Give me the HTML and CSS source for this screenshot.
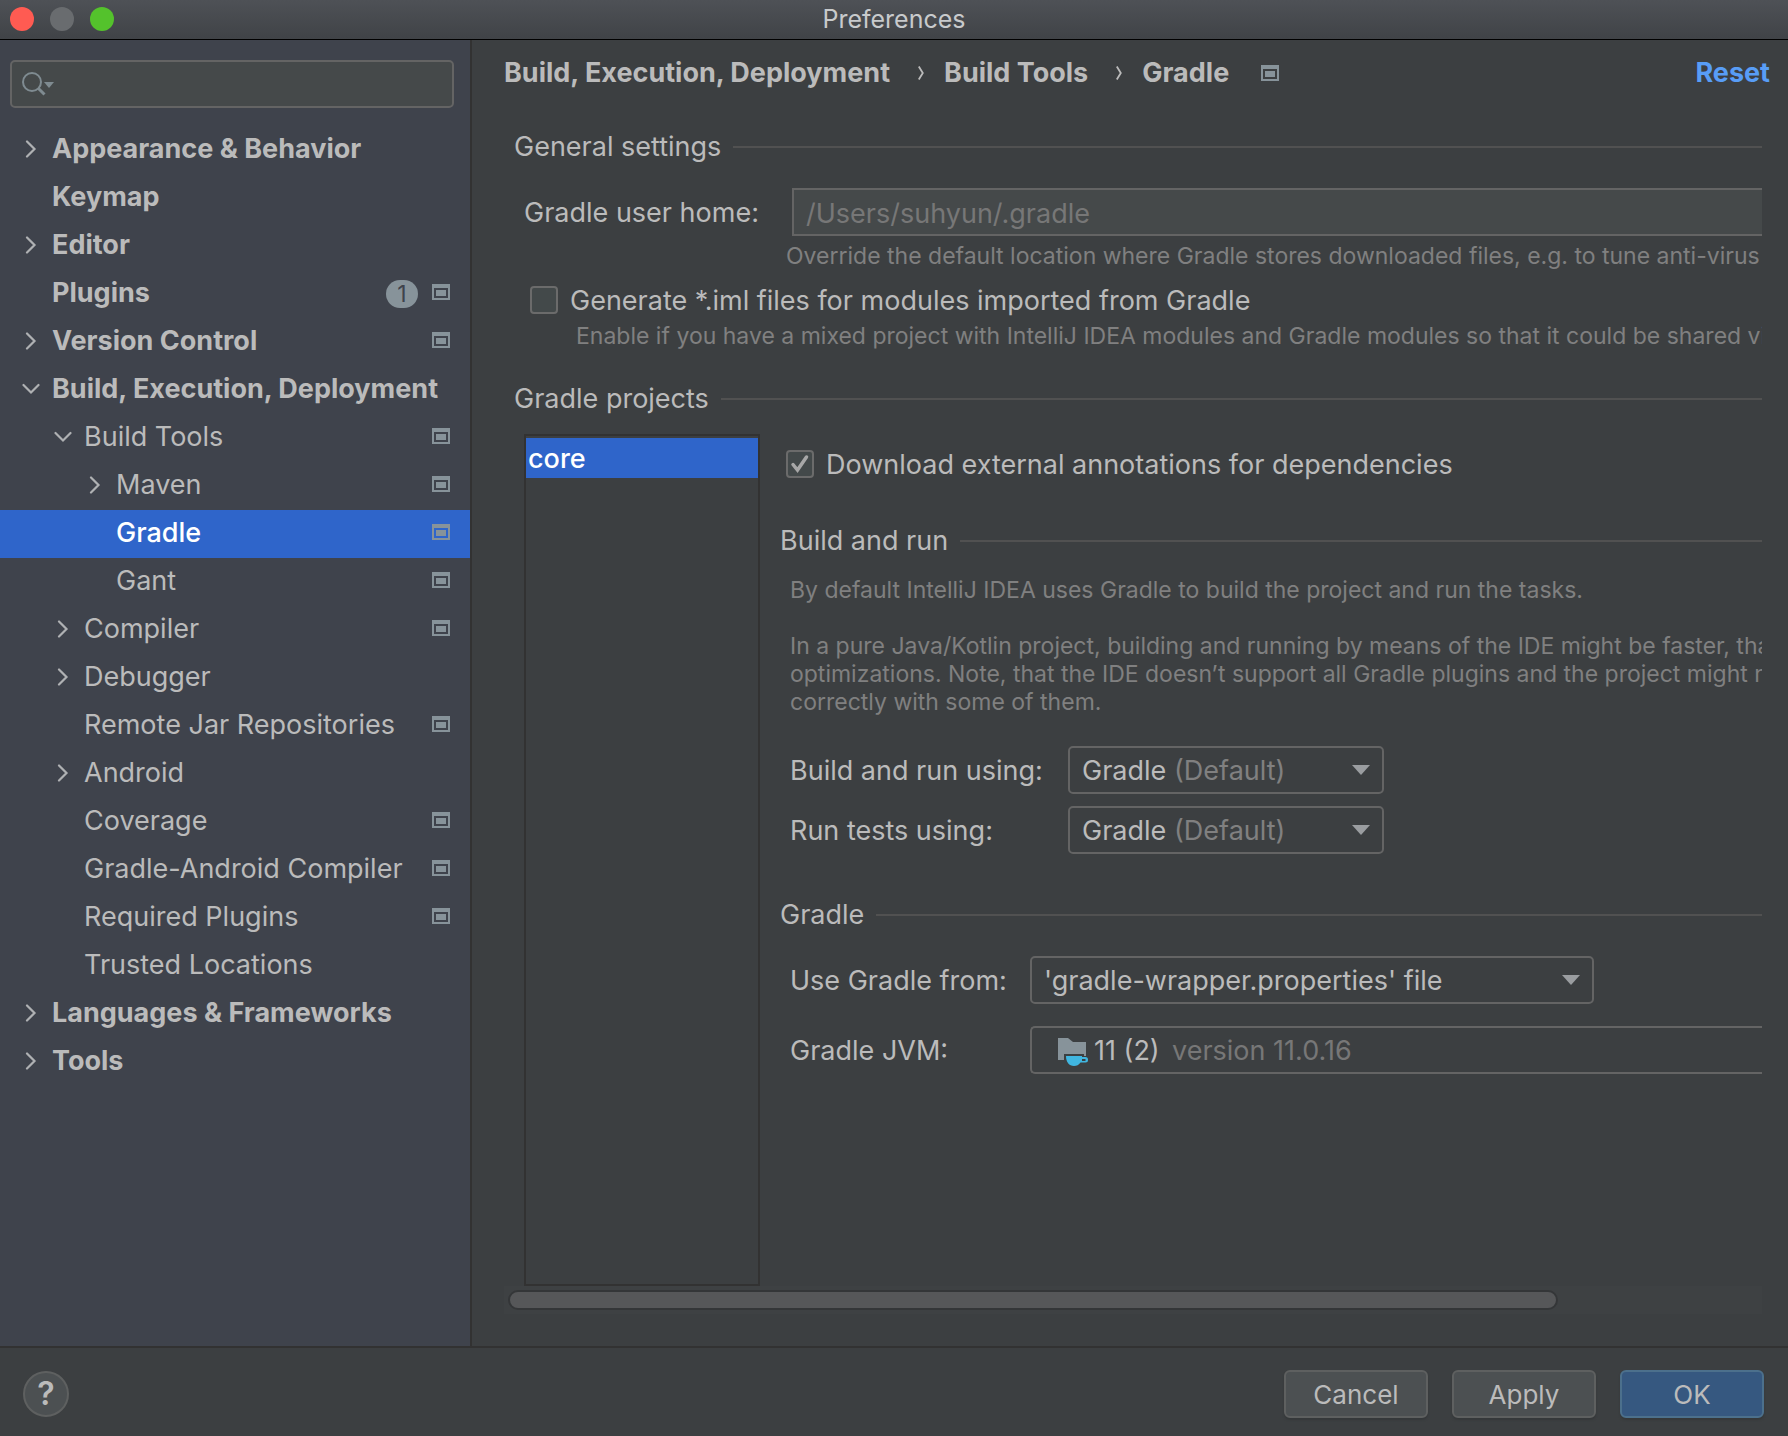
FILE: index.html
```html
<!DOCTYPE html>
<html lang="en">
<head>
<meta charset="utf-8">
<title>Preferences</title>
<link rel="stylesheet" href="styles.css">
</head>
<body>
<svg class="sprite" aria-hidden="true">
  <symbol id="right" viewBox="0 0 18 18"><path d="M5 1.500 12.500 9 5 16.500" fill="none" stroke="currentColor" stroke-width="2.200" stroke-linecap="round"/></symbol>
  <symbol id="down" viewBox="0 0 18 18"><path d="M1.500 5 9 12.500 16.500 5" fill="none" stroke="currentColor" stroke-width="2.200" stroke-linecap="round"/></symbol>
  <symbol id="project" viewBox="0 0 18 16"><path d="M0 0h18v16H0zM2 4v10h14V4z" fill="currentColor" fill-rule="evenodd"/><path d="M4 6h10v6H4z" fill="currentColor"/></symbol>
  <symbol id="crumb" viewBox="0 0 6 14"><path d="M.8.5 4.800 7 .8 13.500" fill="none" stroke="currentColor" stroke-width="1.800"/></symbol>
</svg>

<header class="titlebar">
  <div class="lights">
    <button class="light light-close" aria-label="Close"></button>
    <button class="light light-minimize" aria-label="Minimize"></button>
    <button class="light light-zoom" aria-label="Zoom"></button>
  </div>
  <h1 class="title">Preferences</h1>
</header>

<div class="window">
  <aside class="sidebar">
    <div class="search">
      <svg class="search-icon" viewBox="0 0 32 24" aria-hidden="true"><circle cx="10" cy="10" r="9" fill="none" stroke="currentColor" stroke-width="2"/><path d="M16.500 16.500 22.500 22.500" stroke="currentColor" stroke-width="3"/><path d="M22 10h10l-5 6z" fill="currentColor"/></svg>
      <input class="search-input" type="search" aria-label="Search settings">
    </div>
    <ul class="tree">
      <li><a class="row top" href="#"><svg class="arrow"><use href="#right"/></svg><span class="name">Appearance &amp; Behavior</span></a></li>
      <li><a class="row top" href="#"><span class="arrow"></span><span class="name">Keymap</span></a></li>
      <li><a class="row top" href="#"><svg class="arrow"><use href="#right"/></svg><span class="name">Editor</span></a></li>
      <li><a class="row top" href="#"><span class="arrow"></span><span class="name">Plugins</span><span class="badge">1</span><svg class="project"><use href="#project"/></svg></a></li>
      <li><a class="row top" href="#"><svg class="arrow"><use href="#right"/></svg><span class="name">Version Control</span><svg class="project"><use href="#project"/></svg></a></li>
      <li><a class="row top" href="#"><svg class="arrow"><use href="#down"/></svg><span class="name">Build, Execution, Deployment</span></a>
        <ul class="branch">
          <li><a class="row child" href="#"><svg class="arrow"><use href="#down"/></svg><span class="name">Build Tools</span><svg class="project"><use href="#project"/></svg></a>
            <ul class="branch">
              <li><a class="row grandchild" href="#"><svg class="arrow"><use href="#right"/></svg><span class="name">Maven</span><svg class="project"><use href="#project"/></svg></a></li>
              <li><a class="row grandchild selected" href="#" aria-current="page"><span class="arrow"></span><span class="name">Gradle</span><svg class="project"><use href="#project"/></svg></a></li>
              <li><a class="row grandchild" href="#"><span class="arrow"></span><span class="name">Gant</span><svg class="project"><use href="#project"/></svg></a></li>
            </ul>
          </li>
          <li><a class="row child" href="#"><svg class="arrow"><use href="#right"/></svg><span class="name">Compiler</span><svg class="project"><use href="#project"/></svg></a></li>
          <li><a class="row child" href="#"><svg class="arrow"><use href="#right"/></svg><span class="name">Debugger</span></a></li>
          <li><a class="row child" href="#"><span class="arrow"></span><span class="name">Remote Jar Repositories</span><svg class="project"><use href="#project"/></svg></a></li>
          <li><a class="row child" href="#"><svg class="arrow"><use href="#right"/></svg><span class="name">Android</span></a></li>
          <li><a class="row child" href="#"><span class="arrow"></span><span class="name">Coverage</span><svg class="project"><use href="#project"/></svg></a></li>
          <li><a class="row child" href="#"><span class="arrow"></span><span class="name">Gradle-Android Compiler</span><svg class="project"><use href="#project"/></svg></a></li>
          <li><a class="row child" href="#"><span class="arrow"></span><span class="name">Required Plugins</span><svg class="project"><use href="#project"/></svg></a></li>
          <li><a class="row child" href="#"><span class="arrow"></span><span class="name">Trusted Locations</span></a></li>
        </ul>
      </li>
      <li><a class="row top" href="#"><svg class="arrow"><use href="#right"/></svg><span class="name">Languages &amp; Frameworks</span></a></li>
      <li><a class="row top" href="#"><svg class="arrow"><use href="#right"/></svg><span class="name">Tools</span></a></li>
    </ul>
  </aside>

  <main class="main">
    <div class="head">
      <nav class="crumbs" aria-label="Breadcrumb">
        <a href="#">Build, Execution, Deployment</a>
        <svg class="crumb"><use href="#crumb"/></svg>
        <a href="#">Build Tools</a>
        <svg class="crumb"><use href="#crumb"/></svg>
        <a href="#" aria-current="page">Gradle</a>
      </nav>
      <svg class="project"><use href="#project"/></svg>
      <a class="reset" href="#">Reset</a>
    </div>

    <div class="viewport">
      <h2 class="section">General settings</h2>
      <div class="general">
        <div class="home">
          <label for="home">Gradle user home:</label>
          <input class="text-input" id="home" type="text" placeholder="/Users/suhyun/.gradle">
        </div>
        <p class="hint home-hint">Override the default location where Gradle stores downloaded files, e.g. to tune anti-virus software</p>
        <div class="check iml">
          <input class="box" type="checkbox" id="iml"><label for="iml">Generate *.iml files for modules imported from Gradle</label>
        </div>
        <p class="hint iml-hint">Enable if you have a mixed project with IntelliJ IDEA modules and Gradle modules so that it could be shared via VCS</p>
      </div>

      <h2 class="section">Gradle projects</h2>
      <div class="projects">
        <ul class="list">
          <li class="list-item">core</li>
        </ul>
        <div class="detail">
          <div class="check">
            <input class="box" type="checkbox" id="annotations" checked><label for="annotations">Download external annotations for dependencies</label>
          </div>

          <h3 class="section">Build and run</h3>
          <div class="hint about">
            <p>By default IntelliJ IDEA uses Gradle to build the project and run the tasks.</p>
            <p>In a pure Java/Kotlin project, building and running by means of the IDE might be faster, thanks to<br>optimizations. Note, that the IDE doesn’t support all Gradle plugins and the project might not be built<br>correctly with some of them.</p>
          </div>
          <div class="form run-form">
            <label for="build">Build and run using:</label>
            <div class="combo">
              <select id="build"><option>Gradle</option><option>IntelliJ IDEA</option></select>
              <span class="note">(Default)</span>
            </div>
            <label for="tests">Run tests using:</label>
            <div class="combo">
              <select id="tests"><option>Gradle</option><option>IntelliJ IDEA</option></select>
              <span class="note">(Default)</span>
            </div>
          </div>

          <h3 class="section">Gradle</h3>
          <div class="form gradle-form">
            <label for="from">Use Gradle from:</label>
            <div class="combo combo-from">
              <select id="from"><option>'gradle-wrapper.properties' file</option></select>
            </div>
            <label for="jvm">Gradle JVM:</label>
            <div class="combo combo-jvm">
              <select id="jvm"><option>11 (2)</option></select>
              <svg class="jdk" viewBox="0 0 30 28" aria-hidden="true"><path d="M0 0h10l5 4h13v14h-2v-2H6v6H0z" fill="#87939a"/><path d="M8 18h16v1h3.500a2.500 2.500 0 0 1 2.500 2.500v.5a2.500 2.500 0 0 1-2.500 2.500H22.500C21 27 18.500 28 16 28 11 28 8 24 8 18zm16 3v2h3.500v-2z" fill="#40b6e0" fill-rule="evenodd"/></svg>
              <span class="note">version 11.0.16</span>
            </div>
          </div>
        </div>
      </div>
    </div>
    <div class="scrollbar"><div class="thumb"></div></div>
  </main>
</div>

<footer class="footer">
  <button class="help" aria-label="Help">?</button>
  <div class="actions">
    <button class="button">Cancel</button>
    <button class="button">Apply</button>
    <button class="button primary">OK</button>
  </div>
</footer>
</body>
</html>
```
FILE: styles.css
```css
* { box-sizing: border-box; }

body {
  margin: 0;
  min-height: 100vh;
  display: flex;
  flex-direction: column;
  background: #3c3f41;
  color: #bbbbbb;
  font: 27px/32px Inter, "Liberation Sans", sans-serif;
}

h1, h2, h3, p, ul { margin: 0; padding: 0; font-size: inherit; font-weight: 400; }
ul { list-style: none; }
a { color: inherit; text-decoration: none; }
button, input, select { margin: 0; font: inherit; color: inherit; }
svg { display: block; flex: none; }
.sprite { position: absolute; width: 0; height: 0; }

/* Title bar */
.titlebar {
  display: grid;
  grid-template-columns: 1fr auto 1fr;
  align-items: center;
  height: 40px;
  padding: 0 10px 2px;
  background: linear-gradient(#4e5156, #404347);
  border-bottom: 1px solid #000000;
}
.lights { display: flex; gap: 16px; }
.light { width: 24px; height: 24px; padding: 0; border: 0; border-radius: 50%; }
.light-close { background: #ff5b52; }
.light-minimize { background: #696c6f; }
.light-zoom { background: #54c22c; }
.title { font-size: 25px; color: #c8cacc; }

.window { flex: 1; display: flex; min-height: 0; }

/* Settings tree */
.sidebar {
  flex: none;
  width: 472px;
  padding-top: 20px;
  background: #3f434c;
  border-right: 2px solid #323232;
}
.search {
  display: flex;
  align-items: center;
  gap: 8px;
  height: 48px;
  margin: 0 16px 18px 10px;
  padding: 0 10px;
  background: #45494a;
  border: 2px solid #646464;
  border-radius: 5px;
}
.search-icon { width: 32px; height: 24px; color: #7f8b91; }
.search-input { flex: 1; min-width: 0; border: 0; padding: 0; background: none; outline: 0; }
.row { display: flex; align-items: center; height: 48px; padding: 0 20px 2px 22px; white-space: nowrap; }
.top { font-weight: 700; }
.child { padding-left: 54px; }
.grandchild { padding-left: 86px; }
.arrow { flex: none; width: 18px; height: 18px; margin-right: 12px; color: #afb1b3; }
.name { flex: 1; }
.selected { background: #2f65ca; color: #ffffff; font-weight: 500; }
.project { width: 18px; height: 16px; color: #87939a; }
.row .project { margin-bottom: 2px; }
.badge {
  width: 32px;
  height: 28px;
  margin: 2px 14px 0 0;
  border-radius: 14px;
  background: #87939a;
  color: #3f434c;
  font-size: 23px;
  font-weight: 400;
  line-height: 28px;
  text-align: center;
}

/* Page heading */
.main { flex: 1; min-width: 0; display: flex; flex-direction: column; padding-bottom: 32px; }
.head { display: flex; align-items: center; padding: 17px 18px 17px 32px; font-weight: 700; }
.crumbs { display: flex; align-items: center; white-space: nowrap; }
.crumb { width: 6px; height: 14px; margin: 0 20px 0 28px; }
.head .project { margin-left: 32px; }
.reset { margin-left: auto; color: #589df6; }

/* Settings page */
.viewport {
  flex: 1;
  display: flex;
  flex-direction: column;
  margin-right: 26px;
  padding-left: 34px;
  overflow: hidden;
  white-space: nowrap;
}
.section { display: flex; align-items: center; gap: 12px; padding-left: 8px; }
.section::after { content: ""; flex: 1; height: 2px; background: #515151; }
.viewport > .section { margin-top: 25px; }
.hint { font-size: 23px; line-height: 28px; color: #808080; }
.home label, .check label, .form label { padding-top: 2px; }

.general { padding: 25px 0 8px 18px; }
.home { display: grid; grid-template-columns: 268px 1fr; align-items: center; }
.text-input {
  height: 48px;
  padding: 2px 12px 0;
  background: #45494a;
  border: 2px solid #646464;
  border-right: 0;
  border-radius: 0;
}
.text-input::placeholder { color: #777777; opacity: 1; }
.home-hint { padding: 6px 0 0 262px; }
.check { display: flex; align-items: center; gap: 12px; height: 32px; }
.box {
  appearance: none;
  width: 28px;
  height: 28px;
  background: #43494a;
  border: 2px solid #6b6b6b;
  border-radius: 4px;
}
.box:checked {
  background: #43494a url("data:image/svg+xml,%3Csvg xmlns='http://www.w3.org/2000/svg' viewBox='0 0 24 24'%3E%3Cpath d='M5 12.500 9.500 18 18.500 5' fill='none' stroke='%23a7a7a7' stroke-width='3.500' stroke-linecap='round'/%3E%3C/svg%3E");
}
.iml { margin: 14px 0 6px 6px; }
.iml-hint { padding-left: 52px; }

.projects { flex: 1; display: grid; grid-template-columns: 236px 1fr; gap: 12px; padding: 19px 0 0 18px; }
.list { padding-top: 2px; border: 2px solid #323232; }
.list-item { height: 40px; padding: 2px 2px 0; line-height: 38px; background: #2f65ca; color: #ffffff; font-weight: 500; }
.detail { padding-top: 14px; min-width: 0; }
.detail .check { padding-left: 14px; }
.detail .section { margin-top: 45px; }
.about { padding: 19px 0 0 18px; }
.about p + p { margin-top: 28px; }

.form { display: grid; align-items: center; padding-left: 18px; }
.run-form { grid-template-columns: 278px 316px; row-gap: 12px; padding-top: 30px; }
.gradle-form { grid-template-columns: 240px 1fr; row-gap: 22px; padding-top: 25px; }
.combo { display: grid; align-items: center; }
.combo > * { grid-area: 1 / 1; }
.combo select {
  appearance: none;
  height: 48px;
  padding: 2px 44px 0 12px;
  border: 2px solid #646464;
  border-radius: 5px;
  background: url("data:image/svg+xml,%3Csvg xmlns='http://www.w3.org/2000/svg' width='18' height='10'%3E%3Cpath d='M0 0h18l-9 10z' fill='%239a9da0'/%3E%3C/svg%3E") no-repeat right 12px center;
}
.note { margin-left: 106px; padding-top: 2px; color: #808080; pointer-events: none; }
.combo-from { width: 564px; }
.combo-jvm select { padding-left: 62px; border-right: 0; border-radius: 5px 0 0 5px; background: none; }
.combo-jvm .note { margin-left: 142px; color: #777777; }
.jdk { width: 30px; height: 28px; margin: 4px 0 0 28px; pointer-events: none; }

.scrollbar { height: 28px; margin: 0 26px 0 32px; padding: 4px; background: #3e4143; }
.thumb { width: 84%; height: 20px; background: #565759; border: 2px solid #343638; border-radius: 10px; }

/* Footer */
.footer {
  display: flex;
  align-items: center;
  justify-content: space-between;
  height: 90px;
  padding: 4px 24px 0 23px;
  border-top: 2px solid #323232;
}
.help {
  width: 46px;
  height: 46px;
  padding: 0;
  border: 2px solid #5e6060;
  border-radius: 50%;
  background: #4c5052;
  font-size: 32px;
  font-weight: 600;
  line-height: 42px;
}
.actions { display: flex; gap: 24px; }
.button {
  width: 144px;
  height: 48px;
  padding: 2px 0 0;
  border: 2px solid #5e6060;
  border-radius: 6px;
  background: #4c5052;
  box-shadow: 0 2px 2px #35383a;
  font-size: 26px;
}
.primary { background: #365880; border-color: #4c708c; }
```
